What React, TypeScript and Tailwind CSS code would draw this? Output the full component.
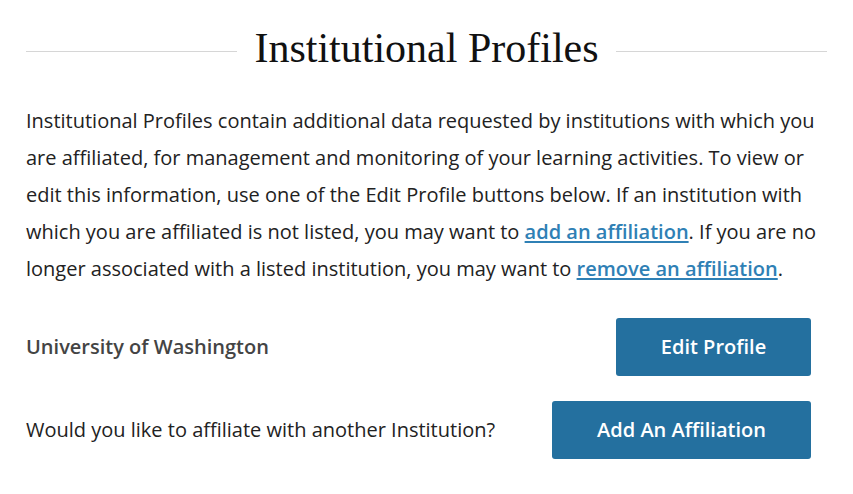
import React from 'react';

const body = { fontFamily: '"Open Sans", sans-serif' };

const App: React.FC = () => {
  return (
    <div className="w-[853px] h-[494px] bg-white px-[26px] pt-[22px] text-[#333]" style={body}>
      <div className="flex items-center gap-[17px]">
        <div className="flex-1 h-px bg-[#d6d6d6] translate-y-[3px]" />
        <h2
          className="text-[42px] leading-[52px] text-[#111]"
          style={{ fontFamily: '"Liberation Serif", serif' }}
        >
          Institutional Profiles
        </h2>
        <div className="flex-1 h-px bg-[#d6d6d6] translate-y-[3px]" />
      </div>

      <p className="mt-[28px] text-[20px] leading-[37px] text-[#222]">
        Institutional Profiles contain additional data requested by institutions with which you are
        affiliated, for management and monitoring of your learning activities. To view or edit this
        information, use one of the Edit Profile buttons below. If an institution with which you are
        affiliated is not listed, you may want to{' '}
        <a href="#" className="font-semibold text-[#2f80b5] underline underline-offset-2">
          add an affiliation
        </a>
        . If you are no longer associated with a listed institution, you may want to{' '}
        <a href="#" className="font-semibold text-[#2f80b5] underline underline-offset-2">
          remove an affiliation
        </a>
        .
      </p>

      <div className="mt-[31px] mr-[16px] flex flex-col gap-[25px]">
        <div className="flex items-center justify-between">
          <span className="text-[20px] font-semibold text-[#444]">University of Washington</span>
          <button className="h-[58px] w-[195px] rounded-[3px] bg-[#24709f] text-[20px] font-semibold text-white">
            Edit Profile
          </button>
        </div>
        <div className="flex items-center justify-between">
          <span className="text-[20px] text-[#222]">Would you like to affiliate with another Institution?</span>
          <button className="h-[58px] w-[259px] rounded-[3px] bg-[#24709f] text-[20px] font-semibold text-white">
            Add An Affiliation
          </button>
        </div>
      </div>
    </div>
  );
};

export default App;
